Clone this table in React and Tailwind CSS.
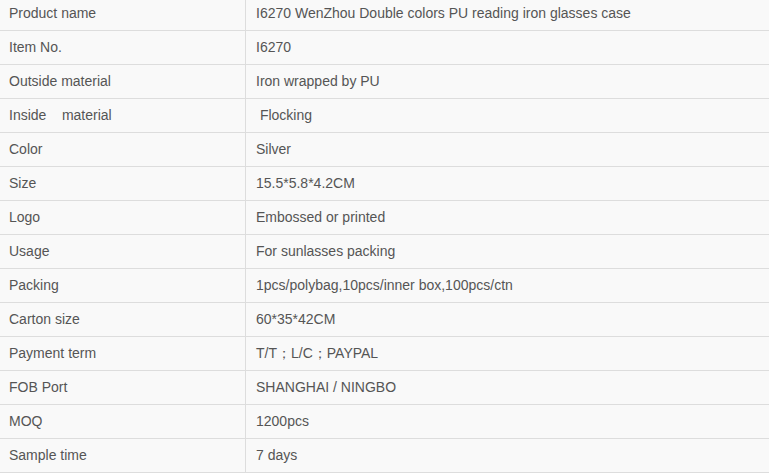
import React from "react";

const rows = [
  ["Product name", "I6270 WenZhou Double colors PU reading iron glasses case"],
  ["Item No.", "I6270"],
  ["Outside material", "Iron wrapped by PU"],
  ["Inside\u00a0\u00a0\u00a0\u00a0material", "\u00a0Flocking"],
  ["Color", "Silver"],
  ["Size", "15.5*5.8*4.2CM"],
  ["Logo", "Embossed or printed"],
  ["Usage", "For sunlasses packing"],
  ["Packing", "1pcs/polybag,10pcs/inner box,100pcs/ctn"],
  ["Carton size", "60*35*42CM"],
  ["Payment term", "T/T\uff1bL/C\uff1bPAYPAL"],
  ["FOB Port", "SHANGHAI / NINGBO"],
  ["MOQ", "1200pcs"],
  ["Sample time", "7 days"],
];

export default function App() {
  return (
    <div className="w-[769px] h-[474px] overflow-hidden bg-white">
      <div className="-mt-[3px] bg-[#f9f9f9] font-['Liberation_Sans',Arial,sans-serif] text-[14px] text-[#555]">
        {rows.map(([label, value]) => (
          <div key={label} className="flex h-[34px] border-b border-[#dddddd]">
            <div className="w-[246px] shrink-0 border-r border-[#dddddd] pl-[9px] flex items-center whitespace-pre">
              {label}
            </div>
            <div className="flex-1 pl-[10px] flex items-center whitespace-pre">{value}</div>
          </div>
        ))}
      </div>
    </div>
  );
}
